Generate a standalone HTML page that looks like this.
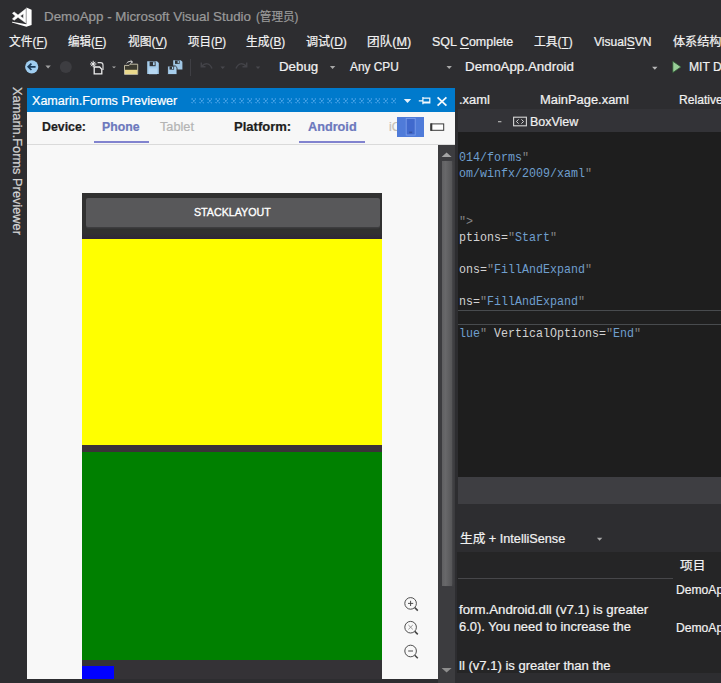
<!DOCTYPE html>
<html lang="zh-CN">
<head>
<meta charset="utf-8">
<title>DemoApp - Microsoft Visual Studio</title>
<style>
html,body{margin:0;padding:0;background:#2d2d30;}
body{width:721px;height:683px;overflow:hidden;background:#2d2d30;position:relative;
  font-family:"Liberation Sans","Noto Sans CJK SC",sans-serif;color:#f1f1f1;font-size:13px;}
.a{position:absolute;}
.t{position:absolute;white-space:nowrap;line-height:20px;transform-origin:0 0;-webkit-text-stroke:0.22px currentColor;}
.t u{text-decoration:underline;text-decoration-thickness:1px;text-underline-offset:1.5px;}
svg{position:absolute;overflow:visible;}
.code{position:absolute;white-space:pre;line-height:16px;font-family:"Liberation Mono","Noto Sans CJK SC",monospace;
  font-size:12.4px;color:#6f9fce;transform-origin:0 0;transform:scaleX(0.9407);}
.code i{font-style:normal;color:#858585;}
.code b{font-weight:normal;color:#d2d2d2;}
.stk{-webkit-text-stroke:0.35px #fff;}
</style>
</head>
<body>
<!-- ===== title bar : VS logo ===== -->
<svg style="left:0;top:0" width="40" height="32" viewBox="0 0 40 32">
  <path d="M26.4 7.5 L31.6 9.7 L31.6 25 L26.4 26.8 L12 22.4 L12 21.8 L26.4 24.2 Z" fill="#fff"/>
  <path d="M12.4 13.3 L14.2 12 L18 15 L25.8 8.8 L25.8 23 L18 17.3 L14.2 20.2 L12.4 18.9 L15.4 16.1 Z M20.3 16.1 L23.4 18.5 L23.4 13.7 Z" fill="#fff" fill-rule="evenodd" stroke="#fff" stroke-width="0.5" stroke-linejoin="round"/>
</svg>

<!-- ===== toolbar icons ===== -->
<svg style="left:0;top:52px" width="721" height="34" viewBox="0 52 721 34">
  <!-- back -->
  <circle cx="31.7" cy="66.8" r="6.6" fill="#9fcdf0"/>
  <path d="M35.6 66.8 H28.4 M31.4 63.6 L28.2 66.8 L31.4 70" stroke="#1b3a57" stroke-width="1.7" fill="none"/>
  <path d="M45.4 65.6 h5.4 l-2.7 3 z" fill="#a0a0a0"/>
  <!-- forward (disabled) -->
  <circle cx="65.8" cy="67" r="6" fill="#3d3d41"/>
  <!-- new item -->
  <path d="M97.6 62.6 h3 q2.4 0 2.4 2.4 v5" fill="none" stroke="#dcdcdc" stroke-width="1.2"/>
  <path d="M94.2 67 h5.4 l2.2 2.2 v4.6 h-7.6 z" fill="none" stroke="#efefef" stroke-width="1.3"/>
  <path d="M93.2 60.8 v6.4 M90 64 h6.4 M91 61.8 l4.4 4.4 M95.4 61.8 l-4.4 4.4" stroke="#f6f6f6" stroke-width="0.95"/>
  <path d="M112 66.4 h4 l-2 1.8 z" fill="#a8a8a8"/>
  <!-- open folder -->
  <path d="M124.5 65.4 h4.6 l1 -1.2 h7.6 v10.2 h-13.2 z" fill="#3b3a30" stroke="#cfcab0" stroke-width="0.9"/>
  <rect x="125" y="69.8" width="12.3" height="4.2" fill="#ead98c"/>
  <path d="M126.6 63.2 c1.4 -1.8 3.4 -2.2 5.6 -1.2 M130.6 60.4 l2 1.6 l-2.2 1.4" stroke="#d8d8d8" stroke-width="1" fill="none"/>
  <!-- save -->
  <path d="M147.2 61.2 h9.8 l1.8 1.8 v11 h-11.6 z" fill="#a6cdec"/>
  <rect x="149.6" y="61.6" width="6" height="4.6" fill="#2f3338"/>
  <rect x="153" y="62.2" width="1.7" height="3" fill="#a6cdec"/>
  <rect x="149" y="68.4" width="8" height="5.8" fill="#b7d8f2"/>
  <!-- save all -->
  <path d="M173.2 60.2 h7.6 l1.6 1.6 v7.8 h-9.2 z" fill="#a0c6e4"/>
  <rect x="175" y="60.5" width="4.6" height="3.4" fill="#2f3338"/>
  <rect x="177.6" y="61" width="1.3" height="2.2" fill="#a0c6e4"/>
  <path d="M167.6 66 h7.8 l1.6 1.6 v7 h-9.4 z" fill="#a6cdec" stroke="#2d2d30" stroke-width="0.9"/>
  <rect x="169.5" y="66.4" width="4.6" height="3.2" fill="#2f3338"/>
  <rect x="172" y="66.9" width="1.3" height="2.1" fill="#a6cdec"/>
  <!-- separator -->
  <rect x="190" y="59" width="1" height="17" fill="#3f3f44"/>
  <!-- undo / redo (disabled) -->
  <path d="M202 66 c3 -3.5 8 -3 10 2.5 M201.3 62.5 v4.2 h4.2" stroke="#434348" stroke-width="1.5" fill="none"/>
  <path d="M220.4 66.4 h4.6 l-2.3 2.5 z" fill="#48484d"/>
  <path d="M246 66 c-3 -3.5 -8 -3 -10 2.5 M246.7 62.5 v4.2 h-4.2" stroke="#434348" stroke-width="1.5" fill="none"/>
  <path d="M255.7 66.4 h4.6 l-2.3 2.5 z" fill="#48484d"/>
  <!-- combo arrows -->
  <path d="M329.9 66 h5.4 l-2.7 3 z" fill="#a8a8a8"/>
  <path d="M446.5 66 h5.4 l-2.7 3 z" fill="#a8a8a8"/>
  <path d="M652.1 66.8 h5.4 l-2.7 3 z" fill="#b8b8b8"/>
  <!-- start -->
  <path d="M672.8 61.2 L681 66.9 L672.8 72.6 Z" fill="#98cf98" stroke="#2f5a33" stroke-width="0.8"/>
</svg>

<!-- ===== previewer tool window ===== -->
<div class="a" style="left:27px;top:88px;width:428px;height:24px;background:#007acc;"></div>
<div class="a" style="left:191px;top:98px;width:208px;height:6px;background-size:8px 6px;background-image:radial-gradient(circle at 1.2px 1px,#3496e0 0.7px,transparent 1.1px),radial-gradient(circle at 4.4px 1px,#3496e0 0.7px,transparent 1.1px),radial-gradient(circle at 2.8px 2.8px,#4aa5e8 0.7px,transparent 1.1px),radial-gradient(circle at 1.2px 4.6px,#3496e0 0.7px,transparent 1.1px),radial-gradient(circle at 4.4px 4.6px,#3496e0 0.7px,transparent 1.1px);"></div>
<svg style="left:400px;top:92px" width="55" height="18" viewBox="400 92 55 18">
  <path d="M403.8 99 h7.4 l-3.7 4 z" fill="#e6f2fb"/>
  <path d="M418.8 100.8 h4 M422.9 97 v7.2 M423 98.2 h6.8 v4.6 h-6.8 M423 102 h6.8" stroke="#f4f9fd" stroke-width="1.2" fill="none"/>
  <path d="M437.6 97.4 l8.8 8.2 M446.4 97.4 l-8.8 8.2" stroke="#f4f9fd" stroke-width="1.8" fill="none"/>
</svg>
<div class="a" style="left:27px;top:112px;width:428px;height:32px;background:#f7f7f7;border-bottom:1px solid #dadada;"></div>
<div class="a" style="left:93.5px;top:140.8px;width:55px;height:2.6px;background:#8183cf;"></div>
<div class="a" style="left:298.7px;top:140.8px;width:66px;height:2.6px;background:#8183cf;"></div>
<div class="a" style="left:27px;top:145px;width:411px;height:534px;background:#f8f8f8;"></div>
<!-- scrollbar -->
<div class="a" style="left:438px;top:145px;width:17px;height:538px;background:#3c3c3f;"></div>
<div class="a" style="left:442.4px;top:161px;width:9.2px;height:425px;background:linear-gradient(90deg,#606062,#68686a 35%,#565658);box-shadow:1.5px 0 1.5px #454548;"></div>
<svg style="left:438px;top:145px" width="18" height="538" viewBox="438 145 18 538">
  <path d="M441.6 157 l5 -4.4 l5 4.4 z" fill="#a4a4a4"/>
  <path d="M441.6 668 l5 4.6 l5 -4.6 z" fill="#8e8e8e"/>
</svg>
<!-- header orientation buttons -->
<div class="a" style="left:397.2px;top:117.2px;width:26.8px;height:19.4px;background:#4f7bd9;z-index:2;"></div>
<svg style="left:396px;top:116px;z-index:3" width="52" height="22" viewBox="396 116 52 22">
  <rect x="406.2" y="118.4" width="9" height="16.6" fill="#4069cd" stroke="#7a9deb" stroke-width="0.9"/>
  <rect x="409.2" y="131.6" width="3" height="1.6" fill="#35519f"/>
  <rect x="430.9" y="123.9" width="12.8" height="6.4" fill="#fdfdfd" stroke="#3a3a3a" stroke-width="1"/>
  <rect x="430.4" y="123.4" width="1.9" height="7.4" fill="#3a3a3a"/>
</svg>

<!-- ===== phone preview ===== -->
<div class="a" style="left:82px;top:193px;width:300.4px;height:486px;background:#313131;"></div>
<div class="a" style="left:85.6px;top:198px;width:294.4px;height:28.6px;background:#58585a;border-radius:2px;box-shadow:0 1.6px 0 #3d3d3f;"></div>
<div class="a" style="left:82px;top:233px;width:300.4px;height:6px;background:linear-gradient(#313131,#2f2638);"></div>
<div class="a" style="left:82px;top:239px;width:300.4px;height:206px;background:#ffff00;"></div>
<div class="a" style="left:82px;top:445px;width:300.4px;height:7px;background:#3b3238;"></div>
<div class="a" style="left:82px;top:451.6px;width:300.4px;height:208px;background:#008000;"></div>
<div class="a" style="left:82px;top:659.6px;width:300.4px;height:19.4px;background:#343236;"></div>
<div class="a" style="left:82px;top:666px;width:32.4px;height:13px;background:#0000ff;"></div>

<!-- zoom buttons -->
<svg style="left:400px;top:594px" width="24" height="70" viewBox="400 594 24 70">
  <g fill="none" stroke="#444" stroke-width="0.95">
    <circle cx="410.6" cy="603.4" r="5.8"/><path d="M414.8 607.6 l3 3" stroke-width="1.5"/>
    <path d="M408 603.4 h5.2 M410.6 600.8 v5.2"/>
    <circle cx="410.6" cy="627.2" r="5.8"/><path d="M414.8 631.4 l3 3" stroke-width="1.5"/>
    <path d="M408.4 625 l4.4 4.4 M412.8 625 l-4.4 4.4" stroke="#8a8a8a" stroke-width="0.9"/>
    <circle cx="410.6" cy="651" r="5.8"/><path d="M414.8 655.2 l3 3" stroke-width="1.5"/>
    <path d="M408.2 651 h4.8"/>
  </g>
</svg>

<!-- ===== editor ===== -->
<div class="a" style="left:458px;top:108.8px;width:263px;height:23.4px;background:#333337;"></div>
<div class="a" style="left:458px;top:132.2px;width:263px;height:344.8px;background:#1e1e1e;"></div>
<div class="a" style="left:458px;top:309.5px;width:263px;height:15px;background:#1f1f1f;border-top:1.4px solid #484b4e;border-bottom:1.4px solid #484b4e;box-sizing:border-box;"></div>
<svg style="left:495px;top:114px" width="36" height="16" viewBox="495 114 36 16">
  <rect x="498" y="121" width="3.4" height="1.3" fill="#a8a8a8"/>
  <rect x="513.6" y="117.2" width="12.8" height="8.6" fill="none" stroke="#d6d6d6" stroke-width="1.1"/>
  <path d="M518.6 119.4 l-2.2 2.1 l2.2 2.1 M521.4 119.4 l2.2 2.1 l-2.2 2.1" fill="none" stroke="#d6d6d6" stroke-width="1"/>
</svg>

<!-- ===== error list ===== -->
<div class="a" style="left:458px;top:477px;width:263px;height:27px;background:#3e3e42;"></div>
<div class="a" style="left:457px;top:551.5px;width:264px;height:121.6px;background:#252526;"></div>
<div class="a" style="left:458px;top:577.5px;width:215.4px;height:1.2px;background:#47474a;"></div>
<svg style="left:595px;top:535px" width="10" height="8" viewBox="595 535 10 8"><path d="M596.9 537.8 h5.4 l-2.7 3 z" fill="#a8a8a8"/></svg>

<!-- left auto-hide tab -->
<div class="t" id="vtab" style="left:27.4px;top:87.4px;font-size:13px;color:#d4d4d4;line-height:20px;transform:rotate(90deg) scaleX(0.985);">Xamarin.Forms Previewer</div>

<!-- text labels -->
<div class="t " style="left:43.77px;top:6.75px;font-size:13px;color:#9a9a9a;transform:scaleX(1.0279);">DemoApp - Microsoft Visual Studio</div>
<div class="t " style="left:256.20px;top:6.74px;font-size:12px;color:#9a9a9a;transform:scaleX(0.9637);">(管理员)</div>
<div class="t " style="left:9.30px;top:31.54px;font-size:12.5px;color:#f1f1f1;transform:scaleX(0.9388);">文件(<u>F</u>)</div>
<div class="t " style="left:68.30px;top:31.54px;font-size:12.5px;color:#f1f1f1;transform:scaleX(0.9229);">编辑(<u>E</u>)</div>
<div class="t " style="left:127.60px;top:31.54px;font-size:12.5px;color:#f1f1f1;transform:scaleX(0.9398);">视图(<u>V</u>)</div>
<div class="t " style="left:187.60px;top:31.54px;font-size:12.5px;color:#f1f1f1;transform:scaleX(0.9157);">项目(<u>P</u>)</div>
<div class="t " style="left:246.00px;top:31.54px;font-size:12.5px;color:#f1f1f1;transform:scaleX(0.9398);">生成(<u>B</u>)</div>
<div class="t " style="left:306.00px;top:31.54px;font-size:12.5px;color:#f1f1f1;transform:scaleX(0.9647);">调试(<u>D</u>)</div>
<div class="t " style="left:366.69px;top:31.54px;font-size:12.5px;color:#f1f1f1;transform:scaleX(1.0100);">团队(<u>M</u>)</div>
<div class="t " style="left:431.70px;top:31.54px;font-size:12.5px;color:#f1f1f1;transform:scaleX(0.9960);">SQL <u>C</u>omplete</div>
<div class="t " style="left:533.50px;top:31.54px;font-size:12.5px;color:#f1f1f1;transform:scaleX(0.9412);">工具(<u>T</u>)</div>
<div class="t " style="left:593.60px;top:31.54px;font-size:12.5px;color:#f1f1f1;transform:scaleX(0.9665);">Visual<u>S</u>VN</div>
<div class="t " style="left:672.80px;top:31.54px;font-size:12.5px;color:#f1f1f1;transform:scaleX(0.9697);">体系结构</div>
<div class="t " style="left:278.74px;top:57.44px;font-size:12.5px;color:#f1f1f1;transform:scaleX(1.0646);">Debug</div>
<div class="t " style="left:350.00px;top:57.44px;font-size:12.5px;color:#f1f1f1;transform:scaleX(0.9498);">Any CPU</div>
<div class="t " style="left:465.43px;top:57.44px;font-size:12.5px;color:#f1f1f1;transform:scaleX(1.0663);">DemoApp.Android</div>
<div class="t " style="left:689.03px;top:57.44px;font-size:12.5px;color:#f1f1f1;transform:scaleX(0.9700);">MIT D</div>
<div class="t " style="left:31.90px;top:90.75px;font-size:13px;color:#ffffff;transform:scaleX(0.9667);">Xamarin.Forms Previewer</div>
<div class="t " style="left:41.60px;top:116.54px;font-size:12.5px;color:#1e1e1e;font-weight:bold;transform:scaleX(0.9883);">Device:</div>
<div class="t " style="left:102.40px;top:116.54px;font-size:12.5px;color:#6c78bd;font-weight:bold;transform:scaleX(0.9805);">Phone</div>
<div class="t " style="left:159.70px;top:116.54px;font-size:12.5px;color:#b4b4b4;transform:scaleX(1.0182);">Tablet</div>
<div class="t " style="left:233.70px;top:116.54px;font-size:12.5px;color:#1e1e1e;font-weight:bold;transform:scaleX(1.0428);">Platform:</div>
<div class="t " style="left:308.00px;top:116.54px;font-size:12.5px;color:#6c78bd;font-weight:bold;transform:scaleX(1.0154);">Android</div>
<div class="t " style="left:389.30px;top:116.54px;font-size:12.5px;color:#c4c0b8;transform:scaleX(0.9700);">iOS</div>
<div class="t stk" style="left:194.30px;top:201.93px;font-size:11px;color:#ffffff;transform:scaleX(0.9700);">STACKLAYOUT</div>
<div class="t " style="left:459.47px;top:90.04px;font-size:12.5px;color:#f1f1f1;transform:scaleX(1.0325);">.xaml</div>
<div class="t " style="left:540.37px;top:90.04px;font-size:12.5px;color:#f1f1f1;transform:scaleX(1.0323);">MainPage.xaml</div>
<div class="t " style="left:679.03px;top:90.04px;font-size:12.5px;color:#f1f1f1;transform:scaleX(0.9700);">Relative</div>
<div class="t " style="left:529.80px;top:111.64px;font-size:12.5px;color:#f1f1f1;transform:scaleX(0.9983);">BoxView</div>
<div class="t " style="left:460.10px;top:529.04px;font-size:12.5px;color:#f1f1f1;transform:scaleX(1.0133);">生成 + IntelliSense</div>
<div class="t " style="left:680.00px;top:556.14px;font-size:12.5px;color:#f1f1f1;transform:scaleX(1.0128);">项目</div>
<div class="t " style="left:675.63px;top:579.84px;font-size:12.5px;color:#f1f1f1;transform:scaleX(0.9700);">DemoAp</div>
<div class="t " style="left:459.40px;top:599.94px;font-size:12.5px;color:#f1f1f1;transform:scaleX(1.0601);">form.Android.dll (v7.1) is greater</div>
<div class="t " style="left:459.40px;top:617.24px;font-size:12.5px;color:#f1f1f1;transform:scaleX(1.0350);">6.0). You need to increase the</div>
<div class="t " style="left:675.63px;top:617.64px;font-size:12.5px;color:#f1f1f1;transform:scaleX(0.9700);">DemoAp</div>
<div class="t " style="left:459.40px;top:655.64px;font-size:12.5px;color:#f1f1f1;transform:scaleX(1.0437);">ll (v7.1) is greater than the</div>
<!-- code editor text -->
<div class="code" style="left:459.4px;top:149.7px;">014/forms<i>"</i></div>
<div class="code" style="left:459.4px;top:165.7px;">om/winfx/2009/xaml<i>"</i></div>
<div class="code" style="left:459.4px;top:213.7px;"><i>"&gt;</i></div>
<div class="code" style="left:459.4px;top:229.7px;"><b>ptions=</b><i>"</i>Start<i>"</i></div>
<div class="code" style="left:459.4px;top:261.7px;"><b>ons=</b><i>"</i>FillAndExpand<i>"</i></div>
<div class="code" style="left:459.4px;top:293.7px;"><b>ns=</b><i>"</i>FillAndExpand<i>"</i></div>
<div class="code" style="left:459.4px;top:325.7px;">lue<i>"</i> <b>VerticalOptions=</b><i>"</i>End<i>"</i></div>

</body>
</html>
